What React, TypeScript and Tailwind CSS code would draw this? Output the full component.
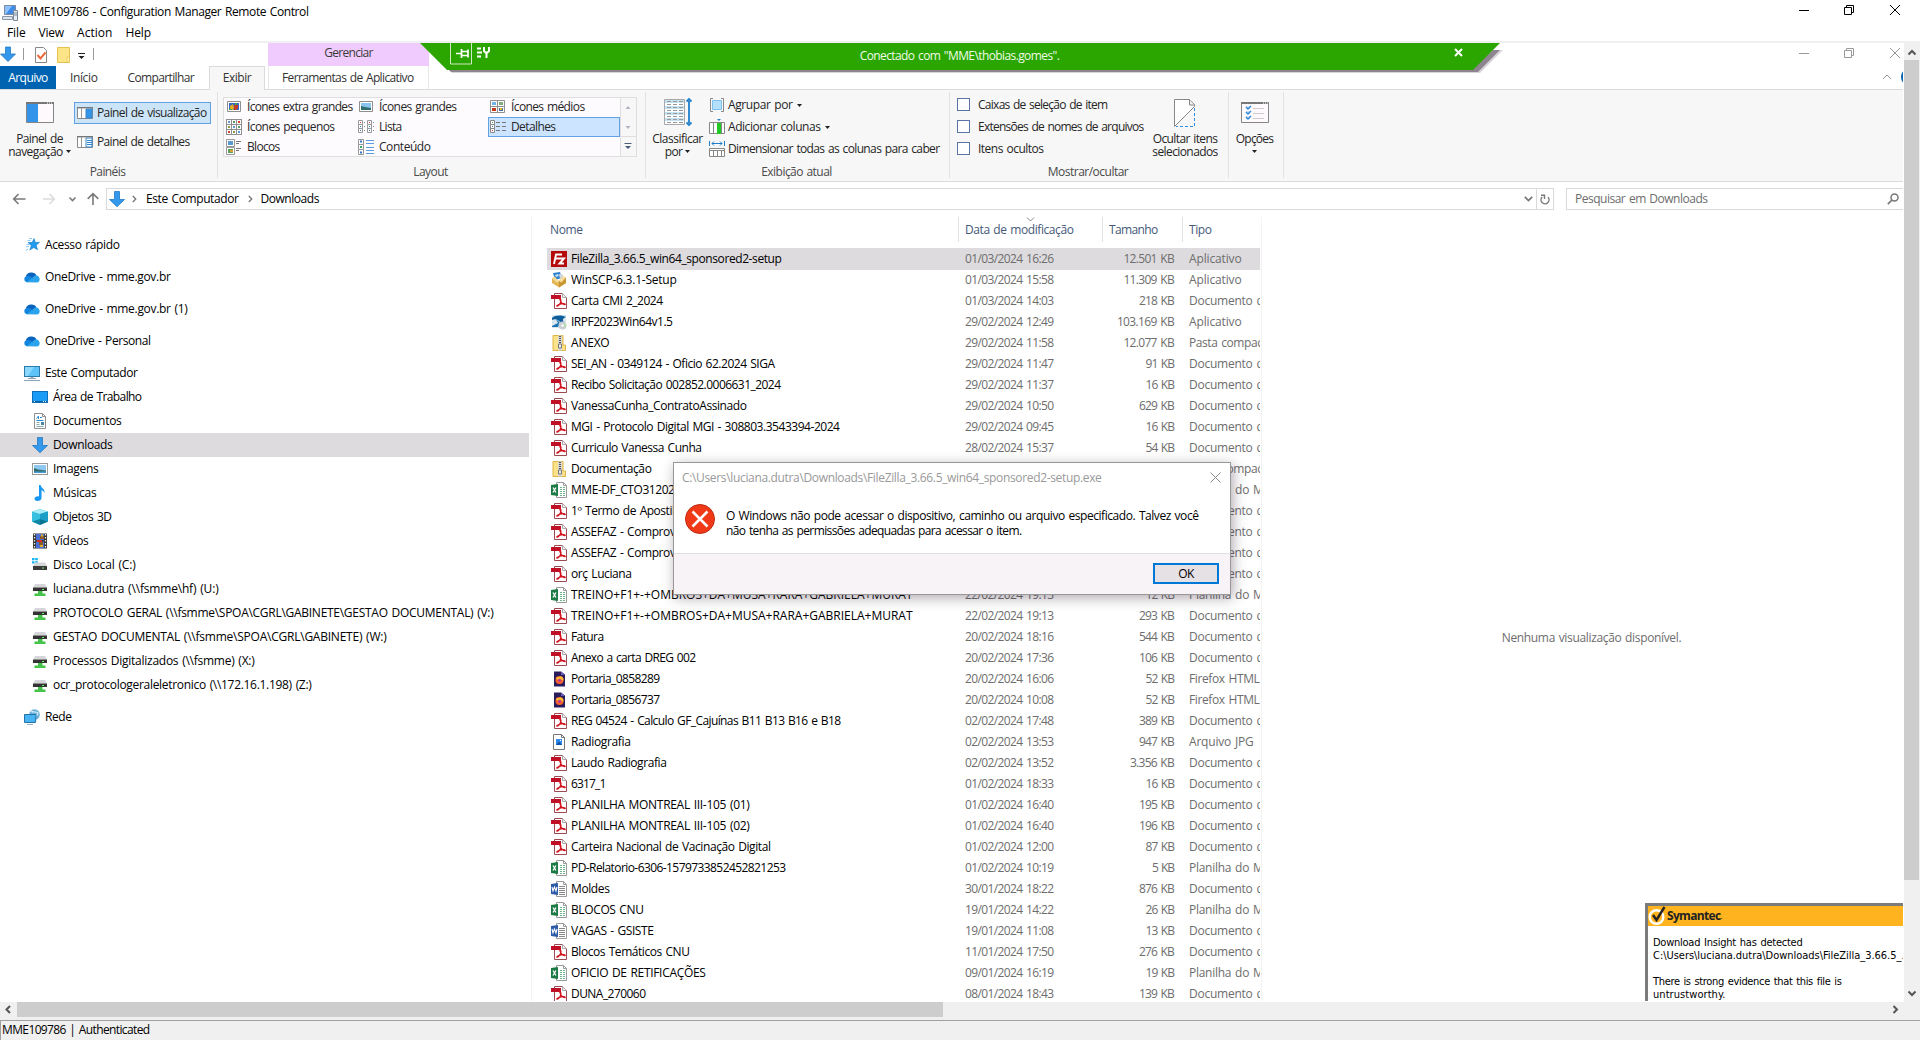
import React, { useLayoutEffect, useRef, useState } from "react";

/** Text run whose letter spacing is tuned so that it takes up `w` pixels. */
function T({ children, w, className = "" }: { children: string; w?: number; className?: string }) {
  const ref = useRef<HTMLSpanElement>(null);
  const [ls, setLs] = useState(0);
  useLayoutEffect(() => {
    if (!w || !ref.current) return;
    const natural = ref.current.getBoundingClientRect().width;
    setLs((w + 0.5 - natural) / children.length);
  }, []);
  return (
    <span ref={ref} className={"inline-block w-fit shrink-0 whitespace-pre [word-spacing:1px] " + className} style={{ letterSpacing: ls }}>
      {children}
    </span>
  );
}

type IconProps = { w?: number; h?: number; vb?: string; className?: string; children: React.ReactNode };
function Svg({ w = 16, h = 16, vb, className = "", children }: IconProps) {
  return (
    <svg width={w} height={h} viewBox={vb ?? `0 0 ${w} ${h}`} className={"block shrink-0 " + className} fill="none">
      {children}
    </svg>
  );
}

const Caret = () => (
  <Svg w={5} h={3}>
    <path d="M0 0h5L2.500 3z" fill="#222" />
  </Svg>
);

/* ---------- navigation icons ---------- */
const DownArrow = () => (
  <Svg>
    <path d="M5.500.5h5v8h5L8 15.700.5 8.500h5z" fill="#3498ec" stroke="#2478c0" strokeWidth=".8" />
  </Svg>
);
const Star = () => (
  <Svg>
    <path d="M10 1.500l1.300 4 4.200-.2-3.300 2.900 1.300 4.500-3.700-2.200-4 2.500 1.500-4.500L4 5.500h4.200z" fill="#1e9bef" stroke="#1278c4" strokeWidth=".6" />
    <path d="M5 1.500h3M3.500 3.500h3M2.500 7.500h3M2 9.500h3M4 12l-2 1.500" stroke="#8ccbf5" />
  </Svg>
);
const Cloud = () => (
  <Svg>
    <path d="M2 7a5.500 4.500 0 0 1 10.500-.5l-6 4z" fill="#0a63bd" />
    <path d="M.3 10a3.500 3.500 0 0 1 4.500-3.200L10 9.500 4 13.300A3.200 3.200 0 0 1 .3 10z" fill="#1484dc" />
    <path d="M2.500 13.300L9 8.500c1-2 3.500-2.500 5-1.500 2.300 1.500 2.400 5.800-.6 6.400z" fill="#2ba4ee" />
  </Svg>
);
const Pc = () => (
  <Svg>
    <rect x=".5" y="1.500" width="15" height="10" fill="#5cc2f8" stroke="#2a7aab" />
    <path d="M1 2h9L4 11H1z" fill="#8bd8fc" />
    <path d="M6.500 12h3v1.500h-3z" fill="#9fb0bb" />
    <path d="M4 13.500h8M0 15.500h16" stroke="#8ba2b1" />
  </Svg>
);
const Desk = () => (
  <Svg>
    <rect x=".5" y="2.500" width="15" height="11" fill="#1a9bf5" stroke="#0e6fb8" />
    <path d="M1 12.500h14" stroke="#0b5d9b" />
    <path d="M2 12.500h1M11 12.500h1M13 12.500h1" stroke="#fff" />
  </Svg>
);
const Doc = () => (
  <Svg>
    <path d="M2.500.5h8l3 3v12h-11z" fill="#fff" stroke="#8f8f8f" />
    <path d="M10.500.5v3h3" stroke="#8f8f8f" />
    <path d="M4.500 5.500l2-2.500v3M8 4.500h2M4.500 7.500h7" stroke="#2b8bd0" />
    <path d="M4.500 9.500h3M4.500 11.500h3M4.500 13.500h7" stroke="#8aa" />
    <path d="M9 9h3v3H9z" fill="#4a88a8" />
  </Svg>
);
const Picture = () => (
  <Svg>
    <rect x=".5" y="2.500" width="15" height="11" fill="#fff" stroke="#9a9a9a" />
    <path d="M2 4h12v8H2z" fill="#8cc8f2" />
    <path d="M2 7l4 1.500 8 1V12H2z" fill="#2f6c6a" />
    <path d="M2 10.500h12V12H2z" fill="#4c9ad4" />
  </Svg>
);
const Music = () => (
  <Svg>
    <path d="M7 0h1.500c.5 3 4.500 3.500 4 8-.8-1.800-2-2.600-3-2.800V13c0 2-2 3-4 3s-3-1-3-2.200C2.500 12 5 11 7 11.500z" fill="#1597f2" />
  </Svg>
);
const Cube = () => (
  <Svg>
    <path d="M8 0l8 2.500v10L8 16 0 12.500v-10z" fill="#38c0e0" />
    <path d="M0 2.500L8 0l8 2.500L8 5z" fill="#a9ecf6" />
    <path d="M8 5l8-2.500v10L8 10z" fill="#1a9ec8" />
    <path d="M0 12.500L8 10v6z" fill="#0f87a5" />
    <path d="M8 10l8 2.500L8 16z" fill="#0a7492" />
  </Svg>
);
const Video = () => (
  <Svg>
    <path d="M1 .5h14v15H1z" fill="#333" />
    <path d="M4 1h8v6H4zM4 8.500h8v6.500H4z" fill="#4a6fd8" />
    <path d="M8 3h4v3H8zM7 9h4v3H7z" fill="#8a5a28" />
    <path d="M5 8h5" stroke="#d82f1c" strokeWidth="2" />
    <path d="M9 1.500h2v2H9zM8 12h3v2H8z" fill="#d8b32a" />
    <path d="M2.500 1v14M13.500 1v14" stroke="#eee" strokeDasharray="1.500 1.500" strokeWidth="1.300" />
  </Svg>
);
const Disk = () => (
  <Svg>
    <path d="M0 1h2.500v2.300H0zM3.200 1h2.600v2.300H3.200zM0 4.200h2.500v2.300H0zM3.200 4.200h2.600v2.300H3.200z" fill="#12b4f5" />
    <path d="M3 5.500h10l2 3.500H1z" fill="#d4d6da" />
    <path d="M1 9h14v4H1z" fill="#3a3a3a" />
    <path d="M10 10.500h2v1h-2z" fill="#6bf06b" />
  </Svg>
);
const NetDisk = () => (
  <Svg>
    <path d="M3 3h10l2 3.500H1z" fill="#d4d6da" />
    <path d="M1 6.500h14V10H1z" fill="#333" />
    <path d="M10 8h2v1h-2z" fill="#6bf06b" />
    <path d="M6 10h4.500v2.500h3V15h-11v-2.500H6z" fill="#45c24a" />
  </Svg>
);
const Net = () => (
  <Svg>
    <circle cx="10.500" cy="5.500" r="5.300" fill="#6bb0d8" />
    <path d="M7 2c2 2 5 0 7 2-1 3-3 3-4 6" stroke="#d8eefa" strokeWidth="1.200" />
    <path d="M.5 5.500h11.500l-.5 8H.5z" fill="#4ab4f2" stroke="#2273a8" />
    <path d="M3 15.500h6" stroke="#9ab4c4" />
  </Svg>
);

/* ---------- file icons ---------- */
const Pdf = () => (
  <Svg>
    <path d="M3.500.5h8l4 4v11h-12z" fill="#fff" stroke="#9c4a50" />
    <path d="M11.500.5v4h4" fill="#eee" stroke="#aaa" />
    <path d="M0 2h10v4H0z" fill="#c01025" />
    <path d="M8.500 5.500c2 0 1.500 2.500 1 4-.7 2-2.500 4-3.500 3.700-1-.5 2-2 4-2.400 2-.4 4.500-.2 4.300.6-.4 1-3.200-.6-4.300-2.400C9.300 8 9 6.500 8.500 5.500z" stroke="#d3141f" strokeWidth="1.200" />
  </Svg>
);
const Office = ({ x }: { x: boolean }) => (
  <Svg>
    <path d="M5.500.5h7l3 3v12h-10z" fill="#fff" stroke="#9a9a9a" />
    <path d="M12.500.5v3h3" stroke="#9a9a9a" />
    {x ? (
      <path d="M9 5.500h2m1 0h2M9 7.500h2m1 0h2M9 9.500h2m1 0h2M9 11.500h2m1 0h2M9 13.500h2m1 0h2" stroke="#6fb58c" />
    ) : (
      <path d="M8 5.500h6M8 7.500h6M8 9.500h6M8 11.500h6M8 13.500h6" stroke="#888" />
    )}
    <path d="M0 3l7-1v12l-7-1z" fill={x ? "#1c7a45" : "#2a5aa8"} />
    {x ? <path d="M2 5.500l3 5M5 5.500l-3 5" stroke="#fff" strokeWidth="1.300" /> : <path d="M1 6l1 4 1.500-4L5 10l1-4" stroke="#fff" strokeWidth="1.100" />}
  </Svg>
);
const Zip = () => (
  <Svg>
    <path d="M2 .5h10v9.500h2.500v5.500H2z" fill="#fce28a" stroke="#dcb544" />
    <path d="M7 .5h4v15H7z" fill="#d8d8d8" />
    <path d="M9 1v10" stroke="#555" strokeWidth="2" strokeDasharray="1 1" />
    <path d="M7.500 9h3v4h-3z" fill="#eee" stroke="#777" />
  </Svg>
);
const Fz = () => (
  <Svg>
    <path d="M0 0h16v16H0z" fill="#b40a0a" />
    <path d="M3 13L5 3.500h6M4.500 7.500h4M8 7.500h5L8.500 12.500H13" stroke="#fff" strokeWidth="1.900" />
  </Svg>
);
const WinScp = () => (
  <Svg>
    <path d="M2 1l7-1 2 6-7 2z" fill="#2f7fcf" />
    <path d="M4 3l3-1 1 2-3 1z" fill="#bce3fa" />
    <path d="M8 2l3 0 2 4-4 1z" fill="#cdd6dd" />
    <path d="M1 6l7 3 7-3.500v5.500L8 15.500 1 11z" fill="#e3b452" />
    <path d="M8 9l7-3.500v5.500L8 15.500z" fill="#c99433" />
    <path d="M1 6l2.500-1.500L8 9l-2 2zM15 5.500L12 4 8 9l2.500 1.500z" fill="#f6dc96" />
  </Svg>
);
const Irpf = () => (
  <Svg>
    <path d="M1 1h14v13H1z" fill="#d9e6ee" />
    <path d="M1 4c4-3 8-3 14-1-3 1-4 3-2 5l-4 0C8 6 4 4 1 6z" fill="#0f5e9c" />
    <path d="M1 12l6-3c-1-2-1-2-2-3 2 0 3 2 4 3l-2 4H1z" fill="#1d74b5" />
    <circle cx="11.500" cy="11.500" r="4" fill="#c8ced2" />
    <path d="M11 12l4-3v4z" fill="#b9e0a8" />
    <circle cx="11.500" cy="11.500" r="1.200" fill="#fff" />
  </Svg>
);
const Firefox = () => (
  <Svg>
    <path d="M3 .5h7l4 3v12H3z" fill="#2a1c5c" />
    <path d="M10 .5l4 3.500h-4z" fill="#6d5bb8" />
    <circle cx="8.500" cy="9" r="4" fill="#f9602c" />
    <path d="M5 7c1-2 2 0 3-1s2-1 3 0c2 1 1.500 3.500 1 4-1-1-2-2-3.500-1.500S6 9 5 7z" fill="#fdbb2d" />
    <circle cx="8.500" cy="9.200" r="1.500" fill="#b6389c" />
  </Svg>
);
const Jpg = () => (
  <Svg>
    <path d="M2.500.5h8l3 3v12h-11z" fill="#fff" stroke="#777" />
    <path d="M10.500.5v3h3" stroke="#777" />
    <path d="M5 5h6v6H5z" fill="#2f8ceb" />
    <path d="M5 11l3-3.500L11 11z" fill="#0f55a8" />
    <path d="M9 6h1v1H9z" fill="#fff" />
  </Svg>
);

const icons: Record<string, React.ReactNode> = {
  pdf: <Pdf />, xls: <Office x />, doc: <Office x={false} />, zip: <Zip />, fz: <Fz />, scp: <WinScp />, irpf: <Irpf />, ff: <Firefox />, jpg: <Jpg />,
};

const APP = "Aplicativo", DOC = "Documento d", ZIP = "Pasta compac", XLS = "Planilha do M", FF = "Firefox HTML", JPG = "Arquivo JPG";
const typeWidth: Record<string, number> = { [APP]: 52, [DOC]: 74, [ZIP]: 73, [XLS]: 74, [FF]: 70, [JPG]: 64 };

const files: [string, string, number, string, string, string][] = [
  ["fz", "FileZilla_3.66.5_win64_sponsored2-setup", 210, "01/03/2024 16:26", "12.501 KB", APP],
  ["scp", "WinSCP-6.3.1-Setup", 105, "01/03/2024 15:58", "11.309 KB", APP],
  ["pdf", "Carta CMI 2_2024", 91, "01/03/2024 14:03", "218 KB", DOC],
  ["irpf", "IRPF2023Win64v1.5", 101, "29/02/2024 12:49", "103.169 KB", APP],
  ["zip", "ANEXO", 38, "29/02/2024 11:58", "12.077 KB", ZIP],
  ["pdf", "SEI_AN - 0349124 - Oficio 62.2024 SIGA", 203, "29/02/2024 11:47", "91 KB", DOC],
  ["pdf", "Recibo Solicitação 002852.0006631_2024", 209, "29/02/2024 11:37", "16 KB", DOC],
  ["pdf", "VanessaCunha_ContratoAssinado", 175, "29/02/2024 10:50", "629 KB", DOC],
  ["pdf", "MGI - Protocolo Digital MGI - 308803.3543394-2024", 268, "29/02/2024 09:45", "16 KB", DOC],
  ["pdf", "Curriculo Vanessa Cunha", 130, "28/02/2024 15:37", "54 KB", DOC],
  ["zip", "Documentação", 80, "", "", ZIP],
  ["xls", "MME-DF_CTO31202", 103, "", "", XLS],
  ["pdf", "1º Termo de Apostil", 103, "", "", DOC],
  ["pdf", "ASSEFAZ - Comprov", 104, "", "", DOC],
  ["pdf", "ASSEFAZ - Comprov", 104, "", "", DOC],
  ["pdf", "orç Luciana", 60, "", "", DOC],
  ["xls", "TREINO+F1+-+OMBROS+DA+MUSA+RARA+GABRIELA+MURAT", 341, "22/02/2024 19:13", "12 KB", XLS],
  ["pdf", "TREINO+F1+-+OMBROS+DA+MUSA+RARA+GABRIELA+MURAT", 341, "22/02/2024 19:13", "293 KB", DOC],
  ["pdf", "Fatura", 32, "20/02/2024 18:16", "544 KB", DOC],
  ["pdf", "Anexo a carta DREG 002", 124, "20/02/2024 17:36", "106 KB", DOC],
  ["ff", "Portaria_0858289", 88, "20/02/2024 16:06", "52 KB", FF],
  ["ff", "Portaria_0856737", 88, "20/02/2024 10:08", "52 KB", FF],
  ["pdf", "REG 04524 - Calculo GF_Cajuínas B11 B13 B16 e B18", 269, "02/02/2024 17:48", "389 KB", DOC],
  ["jpg", "Radiografia", 59, "02/02/2024 13:53", "947 KB", JPG],
  ["pdf", "Laudo Radiografia", 95, "02/02/2024 13:52", "3.356 KB", DOC],
  ["pdf", "6317_1", 34, "01/02/2024 18:33", "16 KB", DOC],
  ["pdf", "PLANILHA MONTREAL III-105 (01)", 178, "01/02/2024 16:40", "195 KB", DOC],
  ["pdf", "PLANILHA MONTREAL III-105 (02)", 178, "01/02/2024 16:40", "196 KB", DOC],
  ["pdf", "Carteira Nacional de Vacinação Digital", 199, "01/02/2024 12:00", "87 KB", DOC],
  ["xls", "PD-Relatorio-6306-1579733852452821253", 214, "01/02/2024 10:19", "5 KB", XLS],
  ["doc", "Moldes", 38, "30/01/2024 18:22", "876 KB", DOC],
  ["xls", "BLOCOS CNU", 72, "19/01/2024 14:22", "26 KB", XLS],
  ["doc", "VAGAS - GSISTE", 82, "19/01/2024 11:08", "13 KB", DOC],
  ["pdf", "Blocos Temáticos CNU", 118, "11/01/2024 17:50", "276 KB", DOC],
  ["xls", "OFICIO DE RETIFICAÇÕES", 134, "09/01/2024 16:19", "19 KB", XLS],
  ["pdf", "DUNA_270060", 74, "08/01/2024 18:43", "139 KB", DOC],
];
const sizeWidth = (s: string) => {
  const digits = s.replace(/\D/g, "").length;
  return digits * 6.500 + (s.includes(".") ? 2.600 : 0) + 15;
};

const tree: [React.ReactNode, string, number][] = [
  [<Star />, "Acesso rápido", 74],
  [<Cloud />, "OneDrive - mme.gov.br", 125],
  [<Cloud />, "OneDrive - mme.gov.br (1)", 142],
  [<Cloud />, "OneDrive - Personal", 105],
];
const children: [React.ReactNode, string, number][] = [
  [<Desk />, "Área de Trabalho", 88],
  [<Doc />, "Documentos", 68],
  [<DownArrow />, "Downloads", 59],
  [<Picture />, "Imagens", 45],
  [<Music />, "Músicas", 43],
  [<Cube />, "Objetos 3D", 58],
  [<Video />, "Vídeos", 35],
  [<Disk />, "Disco Local (C:)", 82],
  [<NetDisk />, "luciana.dutra (\\\\fsmme\\hf) (U:)", 165],
  [<NetDisk />, "PROTOCOLO GERAL (\\\\fsmme\\SPOA\\CGRL\\GABINETE\\GESTAO DOCUMENTAL) (V:)", 440],
  [<NetDisk />, "GESTAO DOCUMENTAL (\\\\fsmme\\SPOA\\CGRL\\GABINETE) (W:)", 333],
  [<NetDisk />, "Processos Digitalizados (\\\\fsmme) (X:)", 201],
  [<NetDisk />, "ocr_protocologeraleletronico (\\\\172.16.1.198) (Z:)", 258],
];

function WindowButtons({ color }: { color: string }) {
  return (
    <Svg w={104} h={12}>
      <g stroke={color}>
        <path d="M0 6.500h10" />
        <path d="M45.500 3.500h7v7h-7zM47.500 3V1.500h7v7H53" />
        <path d="M91 1l10 10M101 1L91 11" />
      </g>
    </Svg>
  );
}

/* ---------- ribbon ---------- */
function Group({ label, lw, className, children: kids }: { label?: string; lw?: number; className: string; children?: React.ReactNode }) {
  return (
    <div className={"mt-[2px] flex h-[86px] shrink-0 flex-col border-r border-[#e2e2e2] " + className}>
      <div className="flex h-[72px] shrink-0">{kids}</div>
      {label && <div className="flex h-4 items-center justify-center pr-[2px] text-[#4a4a4a]"><T w={lw}>{label}</T></div>}
    </div>
  );
}

const PaneIcon = ({ detail = false }: { detail?: boolean }) => (
  <Svg h={12}>
    <path d="M.5.5h15v11H.5z" fill="#fff" stroke="#8a8a8a" />
    <path d="M0 .7h16" stroke="#777" strokeWidth="1.400" />
    <path d="M4.500 1v10" stroke="#999" />
    <path d="M9 2h6v9H9z" fill={detail ? "#fff" : "#3494ea"} stroke="#3c87c8" />
    {detail && <path d="M10 4.500h5M10 6.500h5M10 8.500h5" stroke="#2e86d6" />}
  </Svg>
);
const thumbs = (cells: number[][], s: number) =>
  cells.map(([x, y], i) => (
    <g key={i}>
      <rect x={x + 0.5} y={y + 0.5} width={s} height={s} fill="#fff" stroke="#8f8f8f" />
      <rect x={x + 2} y={y + 2} width={s - 3} height={s - 3} fill={["#5a9ad6", "#5a9a6a", "#d6402a", "#8a9a40"][i % 4]} />
    </g>
  ));
const XLarge = () => (
  <Svg h={14}>
    <path d="M1.500 1.500h13v10h-13z" fill="#fff" stroke="#8f8f8f" />
    <path d="M3 3h10v7H3z" fill="#3a66c8" />
    <path d="M4 6l3-2 1 4-1 2H4z" fill="#e0b020" />
    <path d="M8 5h4v3l-2 2H8z" fill="#c83a28" />
    <path d="M3 9h3v1H3zM9 3h2v2H9z" fill="#3fa050" />
  </Svg>
);
const Large = () => (
  <Svg h={14}>
    <path d="M1.500 1.500h13v10h-13z" fill="#fff" stroke="#8f8f8f" />
    <path d="M3 3h10v7H3z" fill="#8cc4f0" />
    <path d="M3 6l4 1 6 1v2H3z" fill="#2f6f70" />
  </Svg>
);
const Medium = () => (
  <Svg>
    <path d="M.5 1.500h14v12H.5zM7.500 1.500v12M.5 7.500h14" fill="#fff" stroke="#8f8f8f" />
    <path d="M2 3h4v3H2z" fill="#6fb2ea" />
    <path d="M9 3h4v3H9z" fill="#7fae7a" />
    <path d="M2 9h4v3H2z" fill="#c8391c" />
    <path d="M9 9h4v3H9z" fill="#4a6aa0" />
    <path d="M10 9h2v2h-2z" fill="#e0c030" />
  </Svg>
);
const Small = () => <Svg>{thumbs([[0, 0], [5, 0], [10, 0], [0, 5], [5, 5], [10, 5], [0, 10], [5, 10], [10, 10]], 5)}</Svg>;
const ListI = () => (
  <Svg>
    {[0, 9].map((x) => (
      <g key={x}>
        <path d={`M${x + 0.5} 1.500h4v4h-4zM${x + 0.5} 5.500h4v4h-4zM${x + 0.5} 9.500h4v4h-4z`} stroke="#999" fill="#fff" />
        <path d={`M${x + 2} 3.500h1`} stroke="#d33" />
        <path d={`M${x + 2} 7.500h1M${x + 2} 11.500h1`} stroke="#37c" />
        <path d={`M${x + 6} 3.500h1M${x + 6} 7.500h1M${x + 6} 11.500h1`} stroke="#888" />
      </g>
    ))}
  </Svg>
);
const Details = () => (
  <Svg>
    <path d="M.5 1.500h4v4h-4zM.5 5.500h4v4h-4zM.5 9.500h4v4h-4z" stroke="#888" fill="#fff" />
    <path d="M2 3.500h1" stroke="#3a6" />
    <path d="M2 7.500h1" stroke="#37c" />
    <path d="M2 11.500h1" stroke="#d33" />
    <path d="M6 3.500h4m2 0h4M6 7.500h4m2 0h4M6 11.500h4m2 0h4" stroke="#777" />
  </Svg>
);
const Blocks = () => (
  <Svg>
    <path d="M.5.5h8v7h-8zM.5 8.500h8v7h-8z" fill="#fff" stroke="#999" />
    <path d="M2 2h5v4H2z" fill="#5a9ad0" />
    <path d="M2 10h5v4H2z" fill="#5aa05a" />
    <path d="M4 11h3v2H4z" fill="#e0a030" />
    <path d="M10 2.500h5M10 4.500h3M10 9.500h5M10 11.500h3" stroke="#777" />
  </Svg>
);
const Content = () => (
  <Svg>
    <path d="M.5.5h5v5h-5zM.5 5.500h5v5h-5zM.5 10.500h5v5h-5z" fill="#fff" stroke="#999" />
    <path d="M2 2.500h2M2 13.500h2" stroke="#37c" strokeWidth="2" />
    <path d="M2 8h2" stroke="#3a6" strokeWidth="2" />
    <path d="M8 1.500h8M8 4.500h8M8 8.500h8M8 11.500h8M8 14.500h8" stroke="#5b9be0" />
  </Svg>
);

const gallery: [React.ReactNode, string, number][] = [
  [<XLarge />, "Ícones extra grandes", 105],
  [<Large />, "Ícones grandes", 77],
  [<Medium />, "Ícones médios", 73],
  [<Small />, "Ícones pequenos", 87],
  [<ListI />, "Lista", 22],
  [<Details />, "Detalhes", 44],
  [<Blocks />, "Blocos", 32],
  [<Content />, "Conteúdo", 51],
];

function Ribbon() {
  return (
    <div className="flex h-[93px] shrink-0 border-y border-[#dadbdc] bg-[#f7f7f7] text-[#262626]">
      <Group label="Painéis" lw={35} className="w-[218px]">
        <div className="flex w-[74px] flex-col items-center pt-[10px] pl-[5px]">
          <Svg w={28} h={21}>
            <path d="M.5.5h27v20H.5z" fill="#fdf9fd" stroke="#858585" />
            <path d="M0 1h28" stroke="#777" strokeWidth="2" />
            <path d="M21 1h1m1 0h1m1 0h1" stroke="#fff" />
            <path d="M1 2h11v18H1z" fill="#3494ea" />
          </Svg>
          <div className="mt-[9px] flex flex-col items-center leading-[13px]">
            <T w={46}>Painel de</T>
            <div className="flex items-center gap-[3px]"><T w={54}>navegação</T><Caret /></div>
          </div>
        </div>
        <div className="flex flex-col gap-[7px] pt-[10px]">
          <div className="flex h-[22px] w-[137px] items-center gap-1 border border-[#62a2e4] bg-[#cce4f7] pl-[2px]">
            <PaneIcon /><T w={109}>Painel de visualização</T>
          </div>
          <div className="flex h-[22px] items-center gap-1 pl-[3px]"><PaneIcon detail /><T w={92}>Painel de detalhes</T></div>
        </div>
      </Group>

      <Group label="Layout" lw={34} className="w-[428px]">
        <div className="mt-[5px] ml-[5px] flex h-[60px] w-[414px] border border-[#dedede] bg-[#fefbfe]">
          <div className="-mt-px grid h-[60px] w-[396px] grid-cols-3 grid-rows-3">
            {gallery.map(([ic, t, w], i) => (
              <div key={t} className={"flex items-center gap-[5px] border pl-px " + (i === 5 ? "border-[#62a2e4] bg-[#cce4ff]" : "border-transparent")}>
                {ic}<T w={w}>{t}</T>
              </div>
            ))}
          </div>
          <div className="flex w-4 shrink-0 flex-col border-l border-[#dedede] bg-[#f7f7f7]">
            <Svg w={15} h={58}>
              <path d="M4.500 11L7 8l2.500 3zM4.500 28L7 31l2.500-3z" fill="#b4b4c0" />
              <path d="M0 38.500h15" stroke="#dedede" />
              <path d="M3.500 45.500h7" stroke="#4a5a78" />
              <path d="M4 48h6l-3 3z" fill="#4a5a78" />
            </Svg>
          </div>
        </div>
      </Group>

      <Group label="Exibição atual" lw={70} className="w-[304px]">
        <div className="flex w-[63px] flex-col items-center pt-[6px]">
          <Svg w={28} h={28}>
            <path d="M.5 1.500h20v25H.5z" fill="#fff" stroke="#a8a8a8" />
            <path d="M1 2h19v3H1zM1 8h19v3H1zM1 14h19v3H1zM1 20h19v3H1z" fill="#c5e2f3" />
            <path d="M3 3.500h16M3 6.500h16M3 9.500h16M3 12.500h16M3 15.500h16M3 18.500h16M3 21.500h16M3 24.500h16" stroke="#999" strokeDasharray="4 2" />
            <path d="M25 3v22M22.500 3.500L25 1l2.500 2.500M22.500 24.500L25 27l2.500-2.500" stroke="#1f7ecb" strokeWidth="1.800" />
          </Svg>
          <div className="mt-[6px] flex flex-col items-center leading-[13px]">
            <T w={50}>Classificar</T>
            <div className="flex items-center gap-[3px]"><T w={17}>por</T><Caret /></div>
          </div>
        </div>
        <div className="flex flex-col pt-[2px]">
          <div className="flex h-[22px] items-center gap-[3px]">
            <Svg>
              <path d="M4 1.500H1.500v13H4M12 1.500h2.500v13H12" stroke="#888" />
              <path d="M3.500 3.500h9v9h-9z" fill="#b5e0fb" stroke="#7cc0f0" />
            </Svg>
            <T w={64}>Agrupar por</T><div className="ml-px"><Caret /></div>
          </div>
          <div className="flex h-[22px] items-center gap-[3px]">
            <Svg>
              <path d="M.5 3.500h15v11H.5zM4.500 4v10M12.500 4v10" fill="#fff" stroke="#888" />
              <path d="M8 4h4v11H8z" fill="#25c925" />
              <path d="M8 0h4l-2 2z" fill="#1f7ecb" />
            </Svg>
            <T w={92}>Adicionar colunas</T><div className="ml-px"><Caret /></div>
          </div>
          <div className="flex h-[22px] items-center gap-[3px]">
            <Svg>
              <path d="M.5 7.500h15v8H.5z" fill="#fff" stroke="#888" />
              <path d="M1 9.500h14M4.500 10v5M8.500 10v5M12.500 10v5" stroke="#888" />
              <path d="M.5 0v5M15.500 0v5M3 2.500h10M5 .5l-2 2 2 2M11 .5l2 2-2 2" stroke="#1f7ecb" />
            </Svg>
            <T w={211}>Dimensionar todas as colunas para caber</T>
          </div>
        </div>
      </Group>

      <Group label="Mostrar/ocultar" lw={80} className="w-[279px]">
        <div className="flex w-[200px] flex-col pt-[2px] pl-[7px]">
          {([["Caixas de seleção de item", 129], ["Extensões de nomes de arquivos", 165], ["Itens ocultos", 65]] as [string, number][]).map(([t, w]) => (
            <div key={t} className="flex h-[22px] items-center gap-2">
              <div className="mb-px h-[13px] w-[13px] border border-[#5a74a8] bg-white" /><T w={w}>{t}</T>
            </div>
          ))}
        </div>
        <div className="flex w-[70px] flex-col items-center pt-[7px]">
          <Svg w={22} h={28}>
            <path d="M.5 27.500V.5h15l5 5v2z" fill="#fff" stroke="#888" />
            <path d="M15.500.5v5.500h5" fill="#eee" stroke="#888" />
            <path d="M20.500 9v18.500H2" stroke="#2e8ee0" strokeDasharray="3 2" />
          </Svg>
          <div className="mt-[5px] flex flex-col items-center leading-[13px]">
            <T w={64}>Ocultar itens</T>
            <T w={65}>selecionados</T>
          </div>
        </div>
      </Group>

      <Group className="w-[55px]">
        <div className="flex w-[51px] flex-col items-center pt-[10px]">
          <Svg w={28} h={21}>
            <path d="M.5.5h27v20H.5z" fill="#fdf9fd" stroke="#858585" />
            <path d="M0 1h28" stroke="#777" strokeWidth="2" />
            <path d="M22 1h1m1 0h1m1 0h1" stroke="#fff" />
            <path d="M5 4h4v3H5zM5 9h4v3H5zM5 14h4v3H5z" fill="#cfe2f2" />
            <path d="M5 5l2 2 3-3M5 10l2 2 3-3M5 15l2 2 3-3" stroke="#2a86d8" strokeWidth="1.300" />
            <path d="M12 6.500h11M12 11.500h11M12 16.500h11" stroke="#ccc" />
          </Svg>
          <div className="mt-[9px] flex flex-col items-center leading-[13px]">
            <T w={37}>Opções</T>
            <div className="mt-[5px]"><Caret /></div>
          </div>
        </div>
      </Group>
    </div>
  );
}

const Chevron = ({ className = "" }: { className?: string }) => (
  <Svg w={5} h={8} className={className}><path d="M.8 1l3 3-3 3" stroke="#777" strokeWidth="1.300" /></Svg>
);

function AddressBar() {
  return (
    <div className="flex h-[35px] shrink-0 items-start pt-[6px]">
      <Svg w={106} h={22}>
        <g stroke="#7a7a7a" strokeWidth="1.600">
          <path d="M14 11h11.500M18.500 6L13.700 11l4.800 5" />
          <path d="M43 11h11.500M49.500 6l4.800 5-4.800 5" stroke="#dcdcdc" />
          <path d="M69.500 9.500l3 3 3-3" />
          <path d="M93 17V6M87.700 10.800L93 5.700l5.300 5.100" />
        </g>
      </Svg>
      <div className="flex h-[22px] w-[1448px] items-center border border-[#d9d9d9] pl-[2px]">
        <DownArrow />
        <Chevron className="ml-[7px]" />
        <T w={92} className="ml-[9px]">Este Computador</T>
        <Chevron className="ml-[9px]" />
        <T w={58} className="ml-[8px]">Downloads</T>
        <Svg w={9} h={6} className="mr-[3px] ml-auto"><path d="M.8.8l3.700 3.700L8.200.8" stroke="#777" strokeWidth="1.700" /></Svg>
        <div className="flex h-full w-[17px] items-center justify-center border-l border-[#d9d9d9]">
          <Svg w={10} h={11}><path d="M2.200 3A4 4 0 1 0 8 3.200M1 1.200h3.500V5" stroke="#777" strokeWidth="1.400" /></Svg>
        </div>
      </div>
      <div className="ml-3 flex h-[22px] w-[337px] items-center border border-r-0 border-[#d9d9d9] pl-2 text-[#6d6d6d]">
        <T w={132}>Pesquisar em Downloads</T>
        <Svg w={12} h={12} className="mr-1 ml-auto"><circle cx="7.500" cy="4.500" r="3.500" stroke="#777" strokeWidth="1.500" /><path d="M5 7L.8 11.200" stroke="#777" strokeWidth="1.700" /></Svg>
      </div>
    </div>
  );
}

function Sidebar() {
  return (
    <div className="flex w-[531px] shrink-0 flex-col pt-4">
      {tree.map(([ic, t, w]) => (
        <div key={t} className="mb-2 flex h-6 items-center gap-[5px] pl-6">{ic}<T w={w}>{t}</T></div>
      ))}
      <div className="flex h-6 items-center gap-[5px] pl-6"><Pc /><T w={92}>Este Computador</T></div>
      {children.map(([ic, t, w]) => (
        <div key={t} className={"flex h-6 w-[529px] items-center gap-[5px] pl-8 " + (t === "Downloads" ? "bg-[#dddbde]" : "")}>{ic}<T w={w}>{t}</T></div>
      ))}
      <div className="mt-2 flex h-6 items-center gap-[5px] pl-6"><Net /><T w={26}>Rede</T></div>
    </div>
  );
}

function FileList() {
  return (
    <div className="flex w-[731px] shrink-0 flex-col overflow-hidden border-x border-[#f3f3f3] pl-[15px]">
      <div className="mb-[6px] flex h-[25px] shrink-0 text-[#44597a]">
        <div className="flex w-[412px] items-center border-r border-[#e2e2e2] pl-[3px]"><T w={32}>Nome</T></div>
        <div className="relative flex w-36 items-center border-r border-[#e2e2e2] pl-[6px]">
          <T w={108}>Data de modificação</T>
          <Svg w={9} h={5} className="absolute top-0 left-[67px]"><path d="M1 .5L4.500 4 8 .5" stroke="#888" /></Svg>
        </div>
        <div className="flex w-20 items-center border-r border-[#e2e2e2] pl-[6px]"><T w={48}>Tamanho</T></div>
        <div className="flex items-center pl-[6px]"><T w={22}>Tipo</T></div>
      </div>
      {files.map(([ic, name, w, date, size, type], i) => (
        <div key={i} className={"flex w-[713px] shrink-0 items-center pl-1 text-[#6d6d6d] " + (i === 0 ? "-mb-px h-[22px] bg-[#dddbde]" : "h-[21px]")}>
          {icons[ic]}
          <div className="ml-1 flex w-[394px] text-black"><T w={w}>{name}</T></div>
          <div className="flex w-[100px]">{date && <T w={88}>{date}</T>}</div>
          <div className="flex w-[109px] justify-end">{size && <T w={sizeWidth(size)}>{size}</T>}</div>
          <div className="ml-[15px] flex w-[71px] overflow-hidden"><T w={typeWidth[type]}>{type}</T></div>
        </div>
      ))}
    </div>
  );
}

function ConnectionBanner() {
  return (
    <div className="absolute top-0 left-[420px] h-[31px] w-[1086px]">
      <Svg w={1086} h={31} className="absolute inset-0">
        <path d="M27 25h1026l20-18h10l-23 23H32z" fill="#d9d4da" />
        <path d="M27 25h1026l20-18h7l-22 22H31z" fill="#8e8590" />
        <path d="M0 0h1080l-27 27H27z" fill="#2ba600" />
        <path d="M30.500 0v21h21V0" stroke="#cfe8c6" />
        <path d="M36 10.500h5M41.500 6v9M42 8.500h6v4h-6M48 6.500v8" stroke="#fff" strokeWidth="1.700" />
        <path d="M57 5.500h4M57 9.500h5M57 13.500h4" stroke="#fff" strokeWidth="1.800" />
        <path d="M64 4v4l1.500 1.500h2L69 8V4M66.500 9v6" stroke="#fff" strokeWidth="2" />
        <path d="M1035 6l7 7M1042 6l-7 7" stroke="#fff" strokeWidth="2" />
      </Svg>
      <div className="relative flex h-[26px] items-center justify-center pr-[7px] text-[#eefbe8]"><T w={199}>{'Conectado com "MME\\thobias.gomes".'}</T></div>
    </div>
  );
}

function ErrorDialog() {
  return (
    <div className="absolute top-[419px] left-[673px] flex h-[133px] w-[558px] flex-col border border-[#989898] bg-white shadow-[2px_3px_12px_rgba(60,40,60,0.4)]">
      <div className="flex h-[29px] items-center pr-[9px] pl-2 text-[#999]">
        <T w={419}>{"C:\\Users\\luciana.dutra\\Downloads\\FileZilla_3.66.5_win64_sponsored2-setup.exe"}</T>
        <Svg w={11} h={11} className="ml-auto"><path d="M.5.5l10 10M10.500.5l-10 10" stroke="#8a8a8a" /></Svg>
      </div>
      <div className="flex grow gap-[11px] pt-[12px] pl-[11px]">
        <Svg w={30} h={30}>
          <circle cx="15" cy="15" r="14.500" fill="#f03a17" stroke="#bd2a14" />
          <path d="M7.500 7.500l15 15M22.500 7.500l-15 15" stroke="#fff" strokeWidth="2.500" />
        </Svg>
        <div className="mt-[4px] flex flex-col items-start leading-[15px] text-black">
          <T w={472}>O Windows não pode acessar o dispositivo, caminho ou arquivo especificado. Talvez você</T>
          <T w={295}>não tenha as permissões adequadas para acessar o item.</T>
        </div>
      </div>
      <div className="flex h-[41px] justify-end border-t border-[#dfdfdf] bg-[#f7f3f7] pt-[9px] pr-[11px]">
        <div className="flex h-[21px] w-[66px] items-center justify-center border-2 border-[#0078d7] bg-[#e5e1e5] text-black"><T w={15}>OK</T></div>
      </div>
    </div>
  );
}

function SymantecToast() {
  return (
    <div className="absolute top-[860px] left-[1645px] flex h-[98px] w-[258px] flex-col overflow-hidden border-t-[3px] border-l-[3px] border-[#7b7b7b] bg-white text-black">
      <div className="flex h-5 shrink-0 items-center bg-[#ffb31f]">
        <Svg w={18} h={20}>
          <circle cx="8.500" cy="11" r="6.800" stroke="#fff" strokeWidth="2.400" />
          <path d="M5 9l3.500 5L16.500 1" stroke="#222" strokeWidth="2.400" />
        </Svg>
        <T w={53} className="ml-px text-[12px] font-bold text-[#222]">Symantec</T>
        <span className="text-[8px]">.</span>
      </div>
      <div className="flex shrink-0 flex-col items-start pt-[10px] pl-[5px] font-['DejaVu_Sans_Condensed','DejaVu_Sans',sans-serif] text-[11px] leading-[13px]">
        <T w={149}>Download Insight has detected</T>
        <T w={251}>{"C:\\Users\\luciana.dutra\\Downloads\\FileZilla_3.66.5_."}</T>
        <T w={188} className="mt-[13px]">There is strong evidence that this file is</T>
        <T w={72}>untrustworthy.</T>
      </div>
    </div>
  );
}

export default function App() {
  return (
    <div className="flex h-[1040px] w-[1920px] flex-col overflow-hidden bg-white font-['Open_Sans','Noto_Sans',sans-serif] text-[12px] leading-[16px] text-black">
      <div className="flex h-6 shrink-0 items-center pl-[2px]">
        <Svg w={17} h={17}>
          <path d="M2.500 1.500h11v9h-11z" fill="#3f8be8" stroke="#7a8ba0" />
          <path d="M3 2h7l-6 8H3z" fill="#8ec2ff" />
          <path d="M.5 12.500h10v3H.5z" fill="#dde3ea" stroke="#8a97a6" />
          <path d="M11.500 6.500h4v10h-4z" fill="#e6ebf1" stroke="#7d8b9a" />
          <path d="M12 9h3M12 11h3" stroke="#7d8b9a" />
        </Svg>
        <T w={285} className="ml-[4px]">MME109786 - Configuration Manager Remote Control</T>
        <div className="mr-[17px] mb-[4px] ml-auto"><WindowButtons color="#000" /></div>
      </div>
      <div className="flex h-[17px] shrink-0 items-center gap-[13px] pl-[7px]">
        <T w={18}>File</T><T w={25}>View</T><T w={35}>Action</T><T w={25}>Help</T>
      </div>
      <div className="h-[2px] shrink-0 bg-[#f0f0f0]" />

      <div className="flex h-[959px] shrink-0">
        <div className="relative mr-px flex h-[958px] w-[1903px] shrink-0 flex-col overflow-hidden">
          <div className="flex h-[23px] shrink-0">
            <Svg w={268} h={23}>
              <path d="M5.500 4h5v7h5L8 18.500.5 11h5z" fill="#3498ec" stroke="#2478c0" strokeWidth=".8" />
              <path d="M23.500 5v12M93.500 5v12" stroke="#999" />
              <path d="M35.500 4.500h8l3 3v12h-11z" fill="#fff" stroke="#888" />
              <path d="M37.500 12l3 3.500 5-6" stroke="#ec6a3c" strokeWidth="2" />
              <path d="M57.500 4.500h12v15h-12z" fill="#fde588" stroke="#e5c250" />
              <path d="M67 14h2.500v5H67z" fill="#fff0b0" stroke="#e5c250" strokeWidth=".7" />
              <path d="M78 10.500h7" stroke="#222" />
              <path d="M78.500 13h6l-3 3z" fill="#222" />
            </Svg>
            <div className="flex w-[161px] items-center justify-center bg-[#f0cbfd] pb-[3px] text-[#3b3b3b]"><T w={48}>Gerenciar</T></div>
            <div className="ml-auto pt-1"><WindowButtons color="#999" /></div>
          </div>
          <div className="flex h-[23px] shrink-0 items-stretch text-[#333]">
            <div className="flex w-14 items-center justify-center bg-[#0063b1] text-white"><T w={39}>Arquivo</T></div>
            <div className="flex w-[153px] items-center pl-[14px]"><T w={27}>Início</T><T w={66} className="ml-[30px]">Compartilhar</T></div>
            <div className="z-10 -mb-px flex w-14 items-center justify-center border border-b-0 border-[#dadbdc] bg-[#f7f7f7] pb-px"><T w={28}>Exibir</T></div>
            <div className="ml-[3px] flex w-[161px] items-center border-x border-[#e8e8e8] pl-[13px]"><T w={131}>Ferramentas de Aplicativo</T></div>
            <Svg w={21} h={23} className="ml-auto">
              <path d="M1 13l4-4 4 4" stroke="#999" />
              <circle cx="28" cy="11" r="9" fill="#0063b1" />
            </Svg>
          </div>
          <Ribbon />
          <AddressBar />
          <div className="flex h-[784px] shrink-0">
            <Sidebar />
            <FileList />
            <div className="flex grow items-center justify-center pt-[58px] pl-[18px] text-[#6d6d6d]"><T w={179}>Nenhuma visualização disponível.</T></div>
          </div>
          <ConnectionBanner />
          <ErrorDialog />
          <SymantecToast />
        </div>
        <div className="flex h-full w-4 flex-col items-center bg-[#f0f0f0]">
          <Svg w={16} h={17}><path d="M4.500 11.500L8 8l3.500 3.500" stroke="#555" strokeWidth="2" /></Svg>
          <div className="mr-px h-[820px] w-[15px] bg-[#cdcdcd]" />
          <Svg w={16} h={17} className="mt-auto"><path d="M4.500 6.500L8 10l3.500-3.500" stroke="#555" strokeWidth="2" /></Svg>
        </div>
      </div>
      <div className="flex h-[18px] shrink-0 bg-[#f0f0f0]">
        <Svg w={17} h={15}><path d="M10 4L6.500 7.500 10 11" stroke="#555" strokeWidth="2" /></Svg>
        <div className="h-[15px] w-[926px] bg-[#cdcdcd]" />
        <Svg w={17} h={15} className="mr-[16px] ml-auto"><path d="M6.500 4L10 7.500 6.500 11" stroke="#555" strokeWidth="2" /></Svg>
      </div>
      <div className="flex h-5 shrink-0 items-center border-t border-l border-[#a0a0a0] bg-[#f0f0f0] pb-px pl-px"><T w={147}>MME109786 | Authenticated</T></div>
    </div>
  );
}
